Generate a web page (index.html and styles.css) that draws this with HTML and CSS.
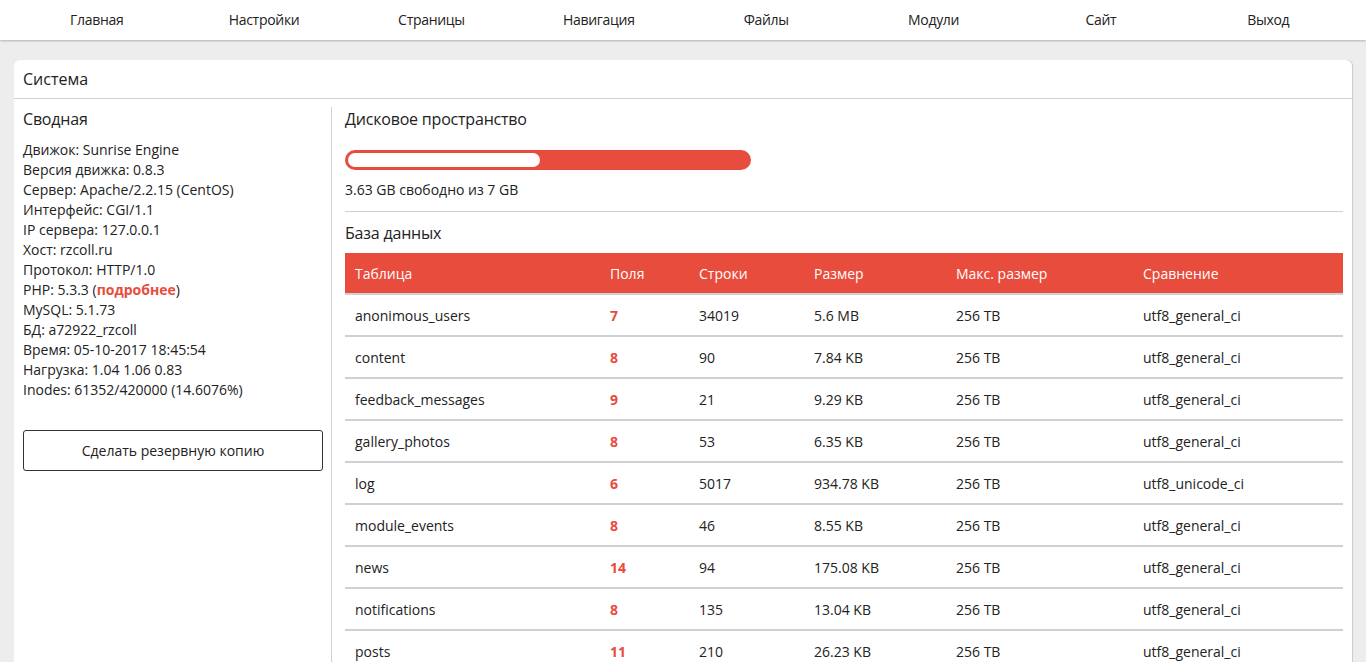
FILE: index.html
```html
<!DOCTYPE html>
<html lang="ru">
<head>
<meta charset="utf-8">
<title>Система</title>
<link rel="stylesheet" href="styles.css">
</head>
<body>
<nav class="topnav">
  <div class="topnav-inner">
    <a class="nav-item">Главная</a>
    <a class="nav-item">Настройки</a>
    <a class="nav-item">Страницы</a>
    <a class="nav-item">Навигация</a>
    <a class="nav-item">Файлы</a>
    <a class="nav-item">Модули</a>
    <a class="nav-item">Сайт</a>
    <a class="nav-item">Выход</a>
  </div>
</nav>
<main class="page">
  <section class="card">
    <header class="card-head">Система</header>
    <div class="card-body">
      <aside class="summary">
        <h2 class="sub-title">Сводная</h2>
        <ul class="info">
          <li>Движок: Sunrise Engine</li>
          <li>Версия движка: 0.8.3</li>
          <li>Сервер: Apache/2.2.15 (CentOS)</li>
          <li>Интерфейс: CGI/1.1</li>
          <li>IP сервера: 127.0.0.1</li>
          <li>Хост: rzcoll.ru</li>
          <li>Протокол: HTTP/1.0</li>
          <li>PHP: 5.3.3 (<a class="more">подробнее</a>)</li>
          <li>MySQL: 5.1.73</li>
          <li>БД: a72922_rzcoll</li>
          <li>Время: 05-10-2017 18:45:54</li>
          <li>Нагрузка: 1.04 1.06 0.83</li>
          <li>Inodes: 61352/420000 (14.6076%)</li>
        </ul>
        <button class="backup">Сделать резервную копию</button>
      </aside>
      <div class="details">
        <h2 class="sub-title">Дисковое пространство</h2>
        <div class="disk-bar"><div class="disk-free" style="width:48%"></div></div>
        <p class="disk-text">3.63 GB свободно из 7 GB</p>
        <hr class="sep">
        <h2 class="sub-title">База данных</h2>
        <table class="db">
          <colgroup>
            <col class="c1"><col class="c2"><col class="c3"><col class="c4"><col class="c5"><col class="c6">
          </colgroup>
          <thead>
            <tr><th>Таблица</th><th>Поля</th><th>Строки</th><th>Размер</th><th>Макс. размер</th><th>Сравнение</th></tr>
          </thead>
          <tbody>
            <tr><td>anonimous_users</td><td class="num">7</td><td>34019</td><td>5.6 MB</td><td>256 TB</td><td>utf8_general_ci</td></tr>
            <tr><td>content</td><td class="num">8</td><td>90</td><td>7.84 KB</td><td>256 TB</td><td>utf8_general_ci</td></tr>
            <tr><td>feedback_messages</td><td class="num">9</td><td>21</td><td>9.29 KB</td><td>256 TB</td><td>utf8_general_ci</td></tr>
            <tr><td>gallery_photos</td><td class="num">8</td><td>53</td><td>6.35 KB</td><td>256 TB</td><td>utf8_general_ci</td></tr>
            <tr><td>log</td><td class="num">6</td><td>5017</td><td>934.78 KB</td><td>256 TB</td><td>utf8_unicode_ci</td></tr>
            <tr><td>module_events</td><td class="num">8</td><td>46</td><td>8.55 KB</td><td>256 TB</td><td>utf8_general_ci</td></tr>
            <tr><td>news</td><td class="num">14</td><td>94</td><td>175.08 KB</td><td>256 TB</td><td>utf8_general_ci</td></tr>
            <tr><td>notifications</td><td class="num">8</td><td>135</td><td>13.04 KB</td><td>256 TB</td><td>utf8_general_ci</td></tr>
            <tr><td>posts</td><td class="num">11</td><td>210</td><td>26.23 KB</td><td>256 TB</td><td>utf8_general_ci</td></tr>
          </tbody>
        </table>
      </div>
    </div>
  </section>
</main>
</body>
</html>
```

FILE: styles.css
```css
* { box-sizing: border-box; }
html, body { margin: 0; padding: 0; }
body {
  background: #ededed;
  font-family: "Open Sans", "Noto Sans", sans-serif;
  font-size: 14px;
  color: #222;
}
.topnav {
  background: #fff;
  height: 40px;
  box-shadow: 0 1px 2px rgba(0,0,0,0.25);
  padding: 0 14px 0 13px;
}
.topnav-inner {
  display: grid;
  grid-template-columns: repeat(8, 1fr);
  height: 39px;
  align-items: center;
}
.nav-item {
  text-align: center;
  font-size: 14px;
  color: #222;
  letter-spacing: -0.3px;
  cursor: pointer;
}
.page {
  padding: 20px 14px 0 14px;
}
.card {
  background: #fff;
  border-radius: 6px 6px 0 0;
  box-shadow: 1px 0 1px rgba(0,0,0,0.15);
  min-height: 600px;
}
.card-head {
  height: 39px;
  line-height: 38px;
  padding: 0 9px;
  font-size: 16px;
  border-bottom: 1px solid #d0d0d0;
}
.card-body {
  display: flex;
  padding-top: 8px;
}
.summary {
  width: 318px;
  flex: none;
  border-right: 1px solid #d0d0d0;
  padding: 2px 9px 0 9px;
  min-height: 560px;
}
.sub-title {
  font-size: 16px;
  font-weight: normal;
  line-height: 20px;
  margin: 0;
  letter-spacing: -0.2px;
}
.info {
  list-style: none;
  margin: 11px 0 0 0;
  padding: 0;
  line-height: 20px;
}
.more {
  color: #e74c3c;
  font-weight: bold;
}
.backup {
  display: block;
  width: 300px;
  height: 41px;
  margin-top: 30px;
  background: #fff;
  border: 1px solid #333;
  border-radius: 3px;
  font-family: inherit;
  font-size: 14px;
  color: #222;
}
.details {
  flex: 1;
  padding: 2px 9px 0 13px;
}
.disk-bar {
  margin-top: 21px;
  width: 406px;
  height: 20px;
  background: #e74c3c;
  border-radius: 10px;
  padding: 3px;
}
.disk-free {
  height: 14px;
  background: #fff;
  border-radius: 7px;
}
.disk-text {
  margin: 10px 0 0 0;
  line-height: 20px;
}
.sep {
  border: 0;
  border-top: 1px solid #d0d0d0;
  margin: 11px 0 11px 0;
}
.db {
  width: 100%;
  margin-top: 10px;
  border-collapse: collapse;
}
.c1 { width: 255px; }
.c2 { width: 89px; }
.c3 { width: 115px; }
.c4 { width: 142px; }
.c5 { width: 187px; }
.db th {
  background: #e74c3c;
  color: #fff;
  font-weight: normal;
  text-align: left;
  height: 41px;
  padding: 0 10px;
  border-bottom: 2px solid #cdd1d5;
}
.db td {
  height: 42px;
  padding: 0 10px;
  border-bottom: 2px solid #cdd1d5;
}
.db td.num {
  color: #e74c3c;
  font-weight: bold;
}
```
